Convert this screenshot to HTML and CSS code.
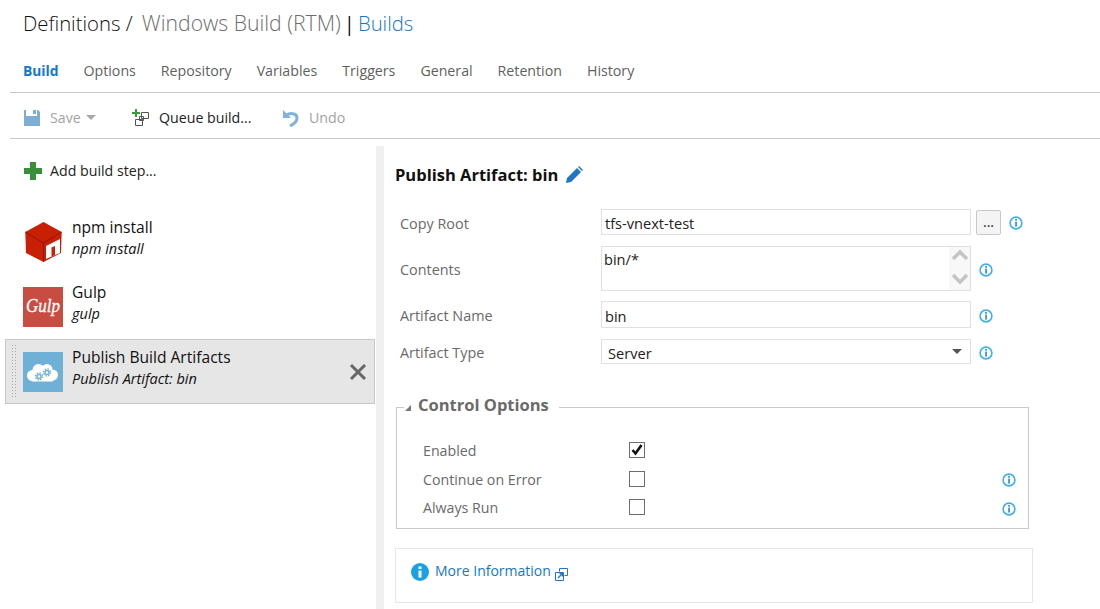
FILE: index.html
```html
<!DOCTYPE html>
<html lang="en">
<head>
    <meta charset="UTF-8">
    <meta name="viewport" content="width=device-width, initial-scale=1.0">
    <title>Windows Build (RTM) - Builds</title>
    <link rel="stylesheet" href="styles.css">
</head>
<body>
    <svg class="defs" width="0" height="0">
        <symbol id="info" viewBox="0 0 14 14">
            <circle cx="7" cy="7" r="5.9" fill="#fff" stroke="#3fb0ea" stroke-width="1.6"/>
            <rect x="6.2" y="3" width="1.7" height="1.7" fill="#2a8fd0"/>
            <rect x="6.2" y="5.6" width="1.7" height="5" fill="#2a8fd0"/>
        </symbol>
    </svg>

    <h1 class="title">Definitions / <span class="title-name">Windows Build (RTM)</span><span class="title-bar">|</span><a class="title-link">Builds</a></h1>

    <nav class="tabs">
        <a class="tab active">Build</a>
        <a class="tab">Options</a>
        <a class="tab">Repository</a>
        <a class="tab">Variables</a>
        <a class="tab">Triggers</a>
        <a class="tab">General</a>
        <a class="tab">Retention</a>
        <a class="tab">History</a>
    </nav>

    <div class="toolbar">
        <button class="tool disabled save">
            <svg width="16" height="16" viewBox="0 0 16 16"><path d="M0 0h2v6h11V0h1l2 2v14H0z" fill="#7fadd3"/><rect x="9" y="0" width="3" height="4" fill="#7fadd3"/></svg>
            Save <span class="caret"></span>
        </button>
        <button class="tool queue">
            <svg width="18" height="18" viewBox="0 0 18 18">
                <path d="M3 0h2v3h3v2H5v3H3V5H0V3h3z" fill="#3a9a3a"/>
                <path d="M9.500 3.500h7v6h-7zM3.500 10.500h7v6h-7z" fill="#fff" stroke="#555"/>
                <path d="M7.500 7.500h4v4h-4z" fill="none" stroke="#555"/>
            </svg>
            Queue build...
        </button>
        <button class="tool disabled undo">
            <svg width="18" height="18" viewBox="0 0 18 18">
                <path d="M1 1v8h8z" fill="#7fb3dc"/>
                <path d="M4 6.500C8 3.500 15 4 15 9c0 3-3 6-7 8" fill="none" stroke="#7fb3dc" stroke-width="3"/>
            </svg>
            Undo
        </button>
    </div>

    <main class="content">
        <section class="steps">
            <button class="add-step">
                <svg width="18" height="18" viewBox="0 0 18 18"><path d="M6 0h6v6h6v6h-6v6H6v-6H0V6h6z" fill="#3a8f3a"/></svg>
                Add build step...
            </button>

            <ul class="step-list">
                <li class="step">
                    <svg class="step-icon" width="40" height="40" viewBox="0 0 40 40">
                        <path d="M20.500 0l18.200 10-.7 21-17.500 9L3 31 2.300 10z" fill="#c81f05"/>
                        <path d="M2.300 10l18.200 11 18.200-11M20.500 21v19" fill="none" stroke="#8f1503" stroke-width="1"/>
                        <path d="M23 24l14-7v14l-14 6z" fill="#fff"/>
                        <path d="M28.500 25.500L32 24v9l-3.500 1.800z" fill="#c81f05"/>
                    </svg>
                    <div class="step-text">
                        <div class="step-name">npm install</div>
                        <div class="step-desc">npm install</div>
                    </div>
                </li>
                <li class="step">
                    <svg class="step-icon" width="40" height="40" viewBox="0 0 40 40">
                        <rect width="40" height="40" fill="#c94c43"/>
                        <text x="3" y="25" textLength="34" lengthAdjust="spacingAndGlyphs" class="gulp-mark">Gulp</text>
                    </svg>
                    <div class="step-text">
                        <div class="step-name">Gulp</div>
                        <div class="step-desc">gulp</div>
                    </div>
                </li>
                <li class="step selected">
                    <span class="grip"></span>
                    <svg class="step-icon" width="40" height="40" viewBox="0 0 40 40">
                        <rect width="40" height="40" fill="#6fb1d6"/>
                        <g fill="#fff">
                            <circle cx="9.500" cy="23.500" r="5.500"/>
                            <circle cx="15.500" cy="18" r="6"/>
                            <circle cx="24" cy="17.500" r="5.500"/>
                            <circle cx="29.500" cy="23" r="5.500"/>
                            <rect x="9" y="22" width="21" height="7.500"/>
                        </g>
                        <g fill="none" stroke="#6fb1d6">
                            <circle cx="16" cy="24.500" r="2" stroke-width="1.500"/>
                            <circle cx="16" cy="24.500" r="3.500" stroke-width="1.500" stroke-dasharray="1.400 1.350"/>
                            <circle cx="24" cy="20.500" r="2" stroke-width="1.500"/>
                            <circle cx="24" cy="20.500" r="3.500" stroke-width="1.500" stroke-dasharray="1.400 1.350"/>
                        </g>
                    </svg>
                    <div class="step-text">
                        <div class="step-name">Publish Build Artifacts</div>
                        <div class="step-desc">Publish Artifact: bin</div>
                    </div>
                    <svg class="step-remove" width="18" height="18" viewBox="0 0 18 18"><path d="M2 2l14 14M16 2L2 16" stroke="#666" stroke-width="3" fill="none"/></svg>
                </li>
            </ul>
        </section>

        <div class="splitter"></div>

        <section class="details">
            <h2 class="details-title">Publish Artifact: bin
                <svg width="18" height="18" viewBox="0 0 18 18"><path d="M1 17l1-5L12 2l4 4L6 16zM13 1l1-1 4 4-1 1z" fill="#1f76c4"/></svg>
            </h2>

            <div class="form">
                <label class="form-label row-copy">Copy Root</label>
                <div class="form-field row-copy">
                    <input class="text-input" type="text" value="tfs-vnext-test">
                    <button class="browse">...</button>
                    <svg class="info info-copy" width="14" height="14"><use href="#info"/></svg>
                </div>

                <label class="form-label row-contents">Contents</label>
                <div class="form-field row-contents">
                    <div class="multi-line">
                        <div class="multi-value">bin/*</div>
                        <div class="scroll">
                            <svg width="16" height="40" viewBox="0 0 16 40">
                                <path d="M1 12l7-7 7 7" fill="none" stroke="#c4c4c4" stroke-width="3.500"/>
                                <path d="M1 28l7 7 7-7" fill="none" stroke="#c4c4c4" stroke-width="3.500"/>
                            </svg>
                        </div>
                    </div>
                    <svg class="info" width="14" height="14"><use href="#info"/></svg>
                </div>

                <label class="form-label row-name">Artifact Name</label>
                <div class="form-field row-name">
                    <input class="text-input" type="text" value="bin">
                    <svg class="info" width="14" height="14"><use href="#info"/></svg>
                </div>

                <label class="form-label row-type">Artifact Type</label>
                <div class="form-field row-type">
                    <div class="select-box">
                        <span class="select-value">Server</span>
                        <span class="select-arrow"></span>
                    </div>
                    <svg class="info" width="14" height="14"><use href="#info"/></svg>
                </div>
            </div>

            <fieldset class="options">
                <legend class="options-legend"><span class="collapse"></span>Control Options</legend>
                <div class="option-row">
                    <span class="option-label">Enabled</span>
                    <span class="check">
                        <svg width="14" height="14" viewBox="0 0 14 14"><path d="M2.500 7l3 3.500L11.500 2" fill="none" stroke="#111" stroke-width="2.600"/></svg>
                    </span>
                </div>
                <div class="option-row">
                    <span class="option-label">Continue on Error</span>
                    <span class="check"></span>
                    <svg class="info" width="14" height="14"><use href="#info"/></svg>
                </div>
                <div class="option-row">
                    <span class="option-label">Always Run</span>
                    <span class="check"></span>
                    <svg class="info" width="14" height="14"><use href="#info"/></svg>
                </div>
            </fieldset>

            <div class="more-info">
                <svg width="18" height="18" viewBox="0 0 18 18">
                    <circle cx="9" cy="9" r="9" fill="#1ba1e2"/>
                    <rect x="7.500" y="3.500" width="3" height="2.500" fill="#fff"/>
                    <rect x="7.500" y="7.500" width="3" height="7" fill="#fff"/>
                </svg>
                <a class="more-link">More Information</a>
                <svg class="more-ext" width="13" height="13" viewBox="0 0 13 13">
                    <path d="M4.500 3.500v-3h8v7h-3M.5 4.500h8v8h-8z" fill="none" stroke="#1f76c4"/>
                    <path d="M3 10l4-4M4.500 5.500H7.500V8.500" fill="none" stroke="#1f76c4" stroke-width="1.300"/>
                </svg>
            </div>
        </section>
    </main>
</body>
</html>
```

FILE: styles.css
```css
* {
    box-sizing: border-box;
}
body {
    margin: 0;
    height: 609px;
    overflow: hidden;
    background: #fff;
    color: #222;
    font-family: 'Open Sans', 'Liberation Sans', sans-serif;
    font-size: 14.2px;
}
button {
    font: inherit;
    color: inherit;
    background: none;
    border: 0;
    padding: 0;
}
svg {
    display: block;
    flex: none;
}
.defs {
    position: absolute;
}

.title {
    margin: 0;
    height: 49px;
    padding: 8px 0 0 23px;
    font-size: 20.3px;
    line-height: 30px;
    font-weight: 300;
    color: #111;
}
.title-name {
    margin-left: 4px;
    font-size: 21.2px;
    color: #6e6e6e;
}
.title-bar {
    margin: 0 3px;
    color: #111;
    font-weight: 400;
}
.title-link {
    color: #1577c4;
}

.tabs {
    display: flex;
    gap: 25px;
    margin-left: 10px;
    height: 44px;
    padding: 12px 0 0 13px;
    border-bottom: 1px solid #c8c8c8;
    line-height: 20px;
    color: #5f5f5f;
}
.tab.active {
    color: #0f78cf;
    font-weight: 700;
    font-size: 13.8px;
}

.toolbar {
    display: flex;
    margin-left: 10px;
    height: 46px;
    padding: 4px 0 0 14px;
    align-items: center;
    border-bottom: 1px solid #c8c8c8;
}
.tool {
    display: flex;
    align-items: center;
    gap: 9px;
}
.tool.disabled {
    color: #a3a3a3;
}
.save {
    width: 108px;
    gap: 10px;
}
.queue {
    width: 150px;
    color: #222;
}
.caret {
    margin-left: -5px;
    border: 5px solid transparent;
    border-top-color: #a8a8a8;
    border-bottom: 0;
}

.content {
    display: flex;
    margin-top: 7px;
    height: 463px;
}
.steps {
    width: 376px;
}
.add-step {
    display: flex;
    align-items: center;
    gap: 8px;
    margin: 15px 0 0 24px;
    color: #222;
}
.step-list {
    list-style: none;
    margin: 29px 1px 0 5px;
    padding: 0;
}
.step {
    display: flex;
    height: 65px;
    align-items: center;
    padding-left: 18px;
    gap: 9px;
}
.step.selected {
    position: relative;
    background: #e6e6e6;
    border: 1px solid #c8c8c8;
    padding-left: 17px;
}
.step-icon {
    flex: none;
}
.step-text {
    align-self: flex-start;
    margin-top: 7px;
}
.selected .step-text {
    margin-top: 6px;
}
.step-name {
    font-size: 15.6px;
    line-height: 22px;
    color: #111;
}
.step-desc {
    font-size: 14.5px;
    line-height: 22px;
    font-style: italic;
    color: #111;
}
.gulp-mark {
    font-family: 'Liberation Serif', serif;
    font-style: italic;
    font-size: 18px;
    fill: #fff;
    stroke: #fff;
    stroke-width: .3px;
}
.grip {
    position: absolute;
    left: 5px;
    top: 4px;
    bottom: 4px;
    width: 6px;
    background-image: radial-gradient(circle, #a8a8a8 1px, transparent 1px);
    background-size: 3px 3px;
}
.step-remove {
    margin-left: auto;
    margin-right: 7px;
}

.splitter {
    width: 8px;
    background: #f0f0f0;
}

.details {
    flex: 1;
    padding-left: 11px;
}
.details-title {
    display: flex;
    align-items: center;
    gap: 7px;
    margin: 17px 0 0;
    font-size: 16.5px;
    line-height: 24px;
    color: #111;
    font-weight: 700;
}

.form {
    display: grid;
    grid-template-columns: 201px 1fr;
    margin: 22px 0 0 5px;
    align-items: center;
    color: #6a6a6a;
}
.form-label {
    padding-top: 2px;
    font-size: 14.4px;
}
.form-field {
    display: flex;
    align-items: center;
    gap: 8px;
}
.form-field .info {
    margin-top: 2px;
}
.row-contents,
.row-type {
    margin-top: 11px;
}
.row-name {
    margin-top: 10px;
}
.text-input,
.multi-line,
.select-box {
    width: 370px;
    background: #fff;
    border: 1px solid #e0e0e0;
    font: inherit;
    font-size: 14.6px;
    color: #222;
}
.text-input {
    height: 26px;
    padding: 2px 3px 0;
    outline: 0;
}
.row-name .text-input {
    height: 27px;
}
.multi-line {
    display: flex;
    justify-content: space-between;
    height: 45px;
    padding-left: 2px;
}
.multi-value {
    line-height: 24px;
}
.scroll {
    width: 21px;
    background: #f8f8f8;
}
.scroll svg {
    margin: 0 0 0 3px;
}
.select-box {
    display: flex;
    justify-content: space-between;
    align-items: center;
    height: 25px;
    padding: 3px 8px 0 6px;
}
.select-arrow {
    border: 5px solid transparent;
    border-top-color: #555;
    border-bottom: 0;
    margin-top: -4px;
}
.browse {
    width: 25px;
    height: 25px;
    margin-left: -3px;
    background: #f4f4f4;
    border: 1px solid #c8c8c8;
    border-radius: 2px;
    color: #222;
    line-height: 22px;
}

.options {
    width: 633px;
    height: 135px;
    margin: 30px 0 0 1px;
    padding: 0 0 0 26px;
    border: 1px solid #c8c8c8;
    min-width: 0;
}
.options-legend {
    display: flex;
    align-items: center;
    margin-left: -19px;
    padding: 0 10px 4px 1px;
    font-size: 16.5px;
    font-weight: 700;
    line-height: 22px;
    color: #6a6a6a;
}
.collapse {
    width: 0;
    height: 0;
    margin: 5px 7px 0 0;
    border-left: 6px solid transparent;
    border-bottom: 6px solid #777;
}
.option-row {
    display: flex;
    align-items: center;
    height: 28.500px;
    color: #6a6a6a;
}
.option-row:first-of-type {
    margin-top: 16px;
}
.option-label {
    width: 206px;
    padding-top: 1px;
}
.check {
    display: block;
    width: 16px;
    height: 16px;
    border: 1px solid #6e6e6e;
    background: #fff;
}
.option-row .info {
    margin: 3px 0 0 357px;
}

.more-info {
    display: flex;
    align-items: center;
    width: 638px;
    height: 55px;
    margin-top: 19px;
    padding: 0 0 8px 15px;
    border: 1px solid #e6e6e6;
}
.more-link {
    margin: 0 4px 0 6px;
    padding-bottom: 2px;
    font-size: 14px;
    color: #1577c4;
}
.more-ext {
    margin-top: 5px;
}
```
